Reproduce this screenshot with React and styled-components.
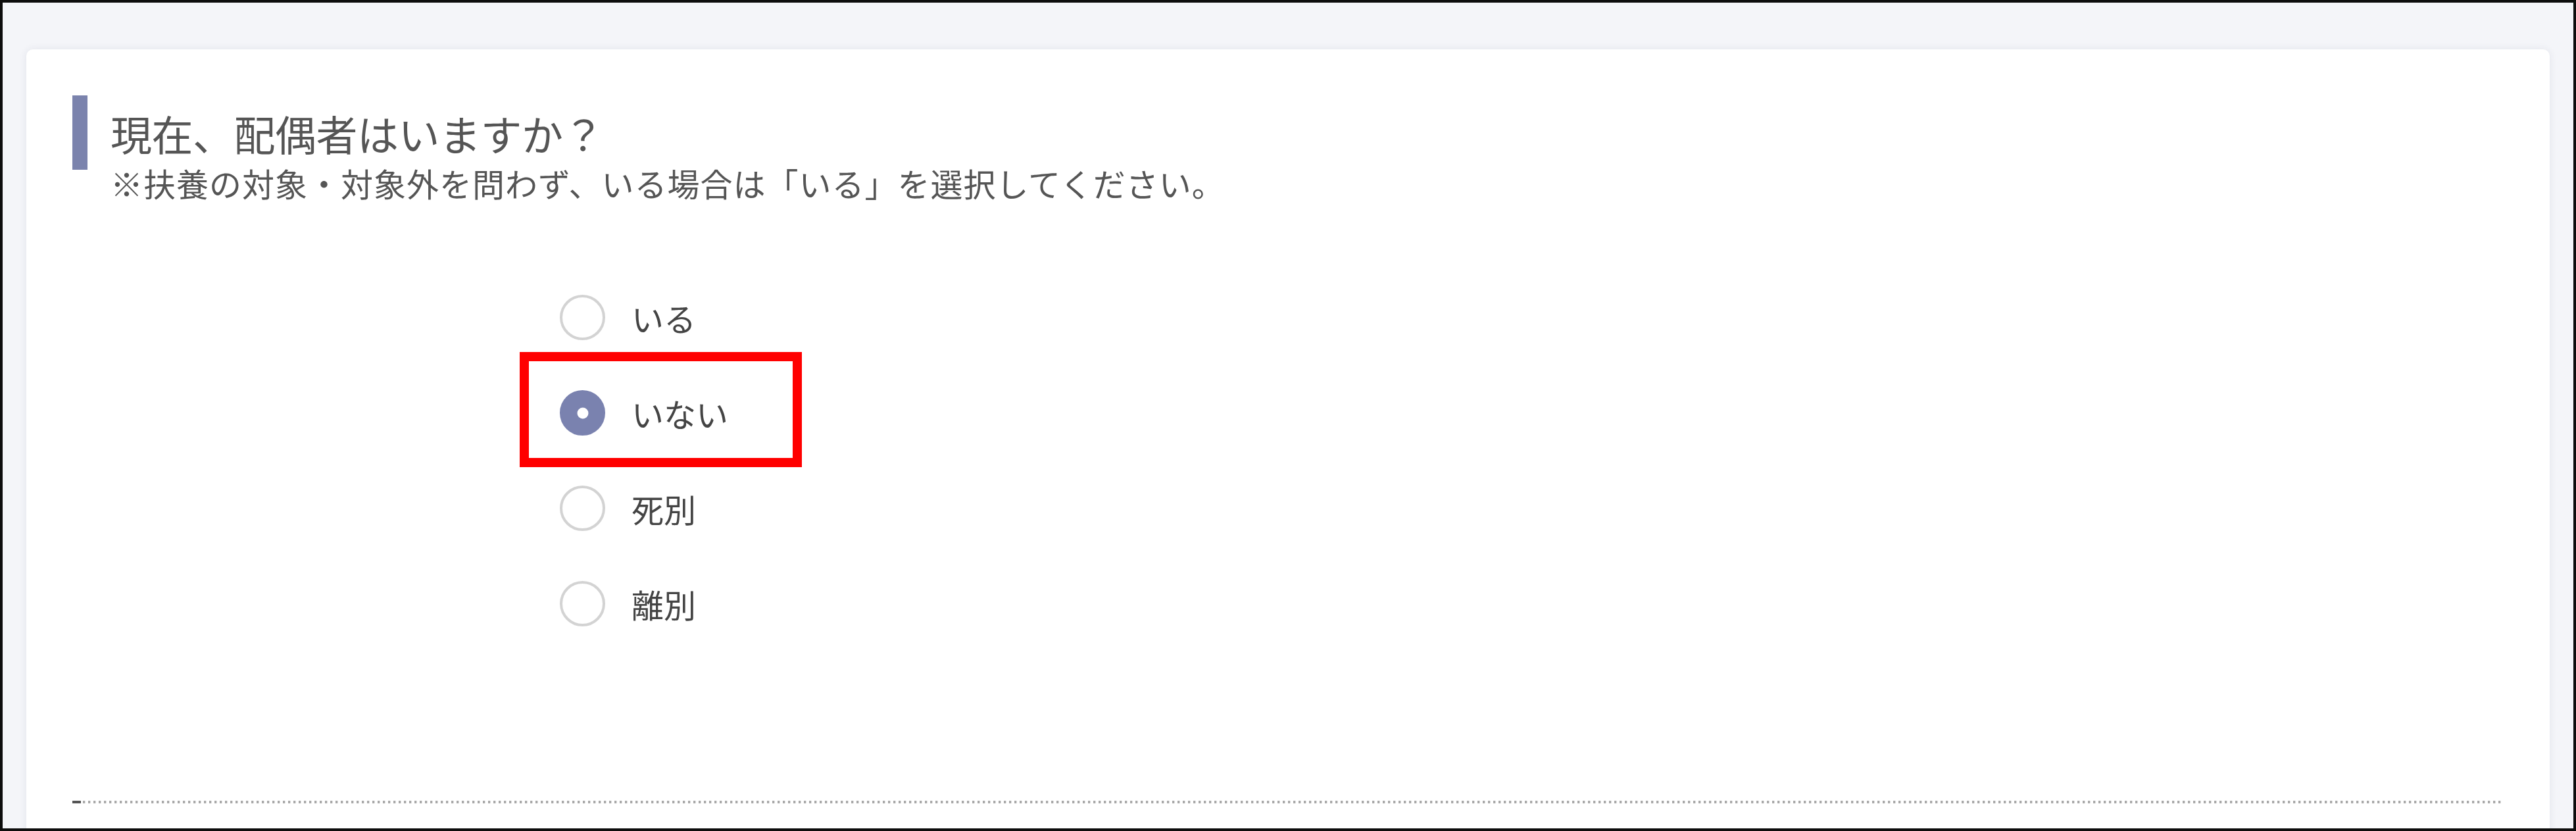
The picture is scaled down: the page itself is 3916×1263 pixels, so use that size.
import React, { useState } from 'react';
import styled, { createGlobalStyle, css } from 'styled-components';

const options = [
    { id: 'yes', text: 'いる' },
    { id: 'no', text: 'いない' },
    { id: 'bereaved', text: '死別' },
    { id: 'divorced', text: '離別' },
];

const GlobalStyle = createGlobalStyle`
    html, body {
        margin: 0;
        padding: 0;
        background: #ffffff;
    }
    body {
        font-family: "Noto Sans CJK JP", "Noto Sans", sans-serif;
    }
`;

export default () => {
    const [selected, setSelected] = useState('no');

    return (
        <>
            <GlobalStyle />
            <Frame>
                <Card>
                    <Question>現在、配偶者はいますか？</Question>
                    <Note>※扶養の対象・対象外を問わず、いる場合は「いる」を選択してください。</Note>
                    <RadioGroup>
                        {options.map(item =>
                            <Option key={item.id} onClick={() => setSelected(item.id)}>
                                <Radio checked={selected === item.id} />
                                <OptionText>{item.text}</OptionText>
                                {item.id === 'no' && <Highlight />}
                            </Option>
                        )}
                    </RadioGroup>
                    <Divider />
                </Card>
            </Frame>
        </>
    );
};

const Frame = styled.div`
    box-sizing: border-box;
    width: 100%;
    height: 1263px;
    border: 4px solid #0d0d0d;
    background-color: #f4f5f9;
    padding: 71px 36px 0;
    overflow: hidden;
`;

const Card = styled.section`
    box-sizing: border-box;
    height: 1300px;
    padding: 70px 71px 0 70px;
    background-color: #ffffff;
    border-radius: 10px;
    box-shadow: 0 0 12px rgba(40, 50, 90, 0.09);
`;

const Question = styled.h2`
    margin: 0;
    padding-left: 35px;
    border-left: 23px solid #7b83ad;
    font-size: 63px;
    font-weight: 400;
    line-height: 113px;
    color: #555555;
    letter-spacing: -0.5px;
`;

const Note = styled.p`
    margin: -10px 0 0 58px;
    font-size: 49px;
    line-height: 60px;
    color: #555555;
    letter-spacing: 1px;
`;

const RadioGroup = styled.div`
    display: flex;
    flex-direction: column;
    margin: 102px 0 0 741px;
`;

const Option = styled.label`
    position: relative;
    display: flex;
    align-items: center;
    gap: 40px;
    height: 145px;
    width: max-content;
    cursor: pointer;
`;

const Radio = styled.span`
    position: relative;
    box-sizing: border-box;
    width: 69px;
    height: 69px;
    border-radius: 50%;
    border: 4px solid #d3d3d3;
    background-color: #ffffff;
    ${props => props.checked && css`
        border-color: #7a82af;
        background-color: #7a82af;
        &::after {
            content: '';
            position: absolute;
            top: 50%;
            left: 50%;
            width: 17px;
            height: 17px;
            border-radius: 50%;
            background-color: #ffffff;
            transform: translate(-50%, -50%);
        }
    `}
`;

const OptionText = styled.span`
    font-size: 49px;
    line-height: 1;
    color: #444444;
`;

const Highlight = styled.span`
    position: absolute;
    box-sizing: border-box;
    top: -20px;
    left: -61px;
    width: 429px;
    height: 175px;
    border: 14px solid #ff0000;
    pointer-events: none;
`;

const Divider = styled.div`
    position: relative;
    margin-top: 227px;
    height: 4px;
    background: repeating-linear-gradient(90deg, #a9a9a9 0 3px, #e2e2e2 3px 4px, transparent 4px 8px);
    &::before {
        content: '';
        position: absolute;
        left: 0;
        top: 0;
        width: 13px;
        height: 4px;
        background-color: #555555;
    }
`;
